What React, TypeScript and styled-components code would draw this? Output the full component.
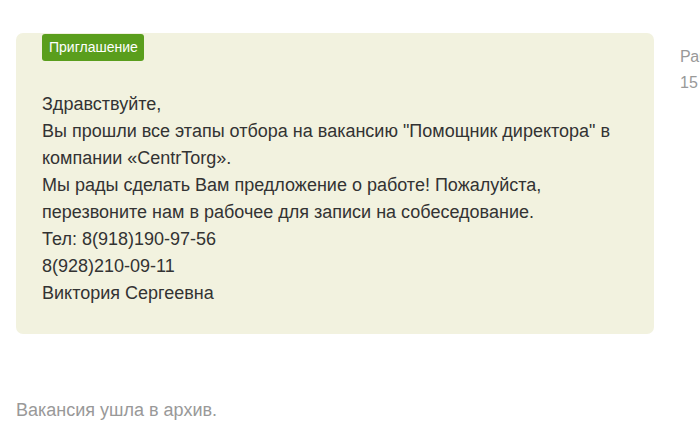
import React from "react";
import styled, { createGlobalStyle } from "styled-components";

const Global = createGlobalStyle`
  html, body { margin: 0; padding: 0; background: #fff; overflow: hidden; }
  body { font-family: "Liberation Sans", Arial, sans-serif; }
`;

const Page = styled.div`
  width: 700px;
  height: 448px;
  overflow: hidden;
  display: flex;
  flex-direction: column;
  padding: 33px 0 0 16px;
  box-sizing: border-box;
`;

const Row = styled.div`
  display: flex;
  align-items: flex-start;
  gap: 26px;
`;

const Card = styled.div`
  width: 638px;
  flex: none;
  box-sizing: border-box;
  background: #f2f2df;
  border-radius: 7px;
  padding: 1px 26px 27px;
`;

const Badge = styled.div`
  display: inline-block;
  background: #5a9e1d;
  color: #fff;
  font-size: 14px;
  line-height: 27px;
  height: 27px;
  padding: 0 6px 0 7px;
  border-radius: 3px;
`;

const Message = styled.div`
  margin-top: 30px;
  color: #333;
  font-size: 18px;
  line-height: 27px;
`;

const Side = styled.div`
  flex: none;
  padding-top: 11px;
  color: #999;
  font-size: 16px;
  line-height: 26px;
  white-space: nowrap;
`;

const Footer = styled.div`
  margin-top: 64px;
  color: #999;
  font-size: 18px;
  line-height: 24px;
`;

export default function App() {
  return (
    <>
      <Global />
      <Page>
        <Row>
          <Card>
            <Badge>Приглашение</Badge>
            <Message>
              Здравствуйте,
              <br />
              Вы прошли все этапы отбора на вакансию "Помощник директора" в
              <br />
              компании «CentrTorg».
              <br />
              Мы рады сделать Вам предложение о работе! Пожалуйста,
              <br />
              перезвоните нам в рабочее для записи на собеседование.
              <br />
              Тел: 8(918)190-97-56
              <br />
              8(928)210-09-11
              <br />
              Виктория Сергеевна
            </Message>
          </Card>
          <Side>
            Работодатель
            <br />
            15 мая
          </Side>
        </Row>
        <Footer>Вакансия ушла в архив.</Footer>
      </Page>
    </>
  );
}
